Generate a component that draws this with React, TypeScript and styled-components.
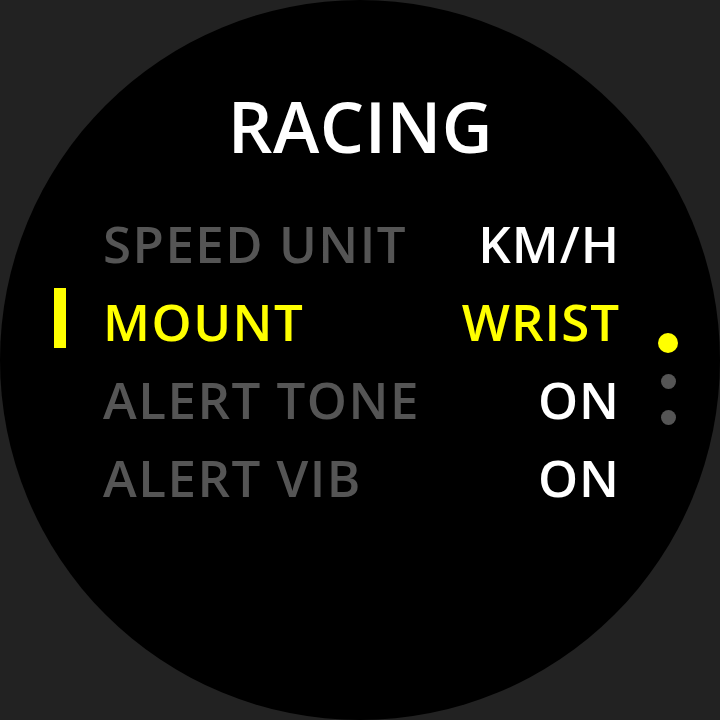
import React from 'react';
import styled, { createGlobalStyle } from 'styled-components';

interface Setting {
	label: string;
	value: string;
}

const settings: Setting[] = [
	{ label: 'SPEED UNIT', value: 'KM/H' },
	{ label: 'MOUNT', value: 'WRIST' },
	{ label: 'ALERT TONE', value: 'ON' },
	{ label: 'ALERT VIB', value: 'ON' },
];

const selectedIndex = 1;
const pages = 3;
const currentPage = 0;

const App: React.FC = () => {
	return (
		<>
			<GlobalStyle />
			<Screen>
				<Dial>
					<Title>RACING</Title>
					<List>
						{settings.map((item, i) => (
							<Row key={item.label}>
								<Marker $visible={i === selectedIndex} />
								<Label $selected={i === selectedIndex}>{item.label}</Label>
								<Value $selected={i === selectedIndex}>{item.value}</Value>
							</Row>
						))}
					</List>
					<PageDots>
						{Array.from({ length: pages }).map((_, i) => (
							<Dot key={i} $active={i === currentPage} />
						))}
					</PageDots>
				</Dial>
			</Screen>
		</>
	);
};

const GlobalStyle = createGlobalStyle`
	html, body {
		margin: 0;
		padding: 0;
		background: #222222;
	}
`;

const Screen = styled.div`
	width: 720px;
	height: 720px;
	background: #222222;
	overflow: hidden;
`;

const Dial = styled.div`
	position: relative;
	width: 720px;
	height: 720px;
	border-radius: 50%;
	background: #000000;
	display: flex;
	flex-direction: column;
	padding-top: 91px;
	box-sizing: border-box;
	font-family: 'Open Sans', 'DejaVu Sans', sans-serif;
`;

const Title = styled.div`
	height: 70px;
	line-height: 70px;
	font-size: 70px;
	font-weight: 600;
	letter-spacing: 0.5px;
	color: #ffffff;
	text-align: center;
	margin-left: 1px;
`;

const List = styled.div`
	margin-top: 43px;
	display: flex;
	flex-direction: column;
`;

const Row = styled.div`
	height: 78px;
	line-height: 78px;
	display: grid;
	grid-template-columns: 12px 1fr auto;
	column-gap: 37px;
	align-items: center;
	padding-left: 54px;
	width: 620px;
	box-sizing: border-box;
	font-size: 51px;
	font-weight: 600;
`;

const Marker = styled.div<{ $visible: boolean }>`
	width: 12px;
	height: 60px;
	margin-top: -6px;
	background: ${(p) => (p.$visible ? '#ffff00' : 'transparent')};
`;

const Label = styled.span<{ $selected: boolean }>`
	white-space: nowrap;
	letter-spacing: 1.5px;
	color: ${(p) => (p.$selected ? '#ffff00' : '#555555')};
`;

const Value = styled.span<{ $selected: boolean }>`
	white-space: nowrap;
	text-align: right;
	letter-spacing: 1px;
	color: ${(p) => (p.$selected ? '#ffff00' : '#ffffff')};
`;

const PageDots = styled.div`
	position: absolute;
	left: 658px;
	top: 333px;
	width: 20px;
	display: flex;
	flex-direction: column;
	align-items: center;
	gap: 21px;
`;

const Dot = styled.div<{ $active: boolean }>`
	width: ${(p) => (p.$active ? '20px' : '15px')};
	height: ${(p) => (p.$active ? '20px' : '15px')};
	border-radius: 50%;
	background: ${(p) => (p.$active ? '#ffff00' : '#555555')};
`;

export default App;
